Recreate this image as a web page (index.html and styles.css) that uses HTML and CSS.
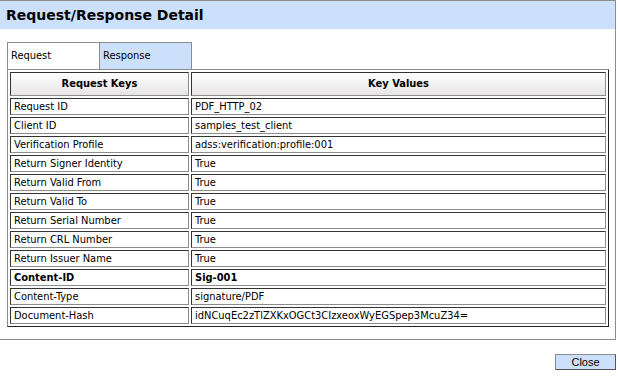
FILE: index.html
```html
<!DOCTYPE html>
<html>
<head>
  <title>Request/Response Detail</title>
  <link rel="stylesheet" href="styles.css">
</head>
<body>
  <div class="dialog">
    <div class="title-bar">Request/Response Detail</div>
    <div class="content">
      <div class="tabs">
        <div class="tab active">Request</div>
        <div class="tab">Response</div>
      </div>
      <table class="detail">
        <tr>
          <th class="key-col">Request Keys</th>
          <th>Key Values</th>
        </tr>
        <tr><td>Request ID</td><td>PDF_HTTP_02</td></tr>
        <tr><td>Client ID</td><td>samples_test_client</td></tr>
        <tr><td>Verification Profile</td><td>adss:verification:profile:001</td></tr>
        <tr><td>Return Signer Identity</td><td>True</td></tr>
        <tr><td>Return Valid From</td><td>True</td></tr>
        <tr><td>Return Valid To</td><td>True</td></tr>
        <tr><td>Return Serial Number</td><td>True</td></tr>
        <tr><td>Return CRL Number</td><td>True</td></tr>
        <tr><td>Return Issuer Name</td><td>True</td></tr>
        <tr class="strong"><td>Content-ID</td><td>Sig-001</td></tr>
        <tr><td>Content-Type</td><td>signature/PDF</td></tr>
        <tr><td>Document-Hash</td><td>idNCuqEc2zTlZXKxOGCt3CIzxeoxWyEGSpep3McuZ34=</td></tr>
      </table>
    </div>
  </div>
  <div class="buttons">
    <button class="btn">Close</button>
  </div>
</body>
</html>
```

FILE: styles.css
```css
body { margin: 0; background: #fff; font-family: "DejaVu Sans Condensed", "DejaVu Sans", Verdana, sans-serif; font-size: 11px; color: #000; }
.dialog { width: 615px; height: 338px; border-top: 1px solid #8c8c8c; border-right: 1px solid #8c8c8c; border-bottom: 1px solid #8c8c8c; }
.title-bar { height: 28px; line-height: 28px; padding-left: 6px; background: #cce0fc; font-family: "DejaVu Sans", Verdana, sans-serif; font-weight: bold; font-size: 14px; }
.content { padding: 13px 0 0 7px; }
.tabs { display: flex; height: 27px; }
.tab { width: 88px; height: 26px; line-height: 26px; padding-left: 3px; border: 1px solid #8c8c8c; border-bottom: none; background: #cce0fc; }
.tab.active { background: #fff; border-right: none; }
.detail { width: 602px; border-collapse: separate; border-spacing: 2px; border: 1px solid; border-color: #8c8c8c #222 #222 #8c8c8c; }
.detail th, .detail td { border: 1px solid; border-color: #333 #8c8c8c #8c8c8c #333; padding: 0 3px; text-align: left; white-space: nowrap; }
.detail td { height: 15px; line-height: 15px; }
.detail th { height: 22px; line-height: 22px; text-align: center; background: linear-gradient(#fff, #e6e4e4); }
.detail .key-col { width: 171px; }
.detail .strong td { font-weight: bold; }
.buttons { display: flex; justify-content: flex-end; padding: 14px 2px 0 0; }
.btn { width: 61px; height: 16px; padding: 0; border: 1px solid; border-color: #8c8c8c #555 #555 #8c8c8c; background: #cce0fc; font-family: "Liberation Sans", Arial, sans-serif; font-size: 11px; color: #000; }
```
